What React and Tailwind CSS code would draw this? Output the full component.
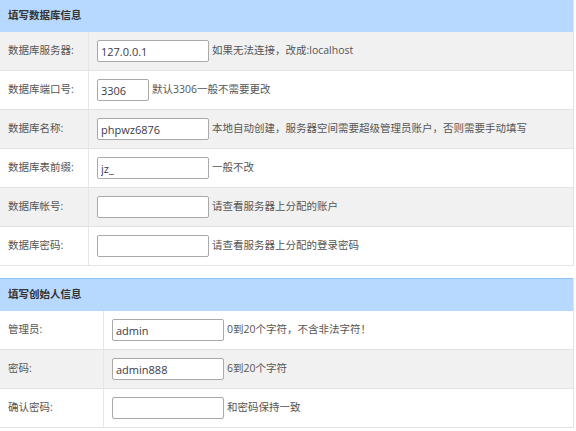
import React from "react";

const font = { fontFamily: '"Open Sans", "Noto Sans CJK SC", "Noto Sans", sans-serif' };

function Row({ label, value, hint, inputW, labelW, gray }) {
  return (
    <div className={`flex h-[39px] border-b border-[#e3e3e3] ${gray ? "bg-[#f1f1f1]" : "bg-white"}`}>
      <div
        className="flex items-center border-r border-[#e6e6e6] pl-[8px] text-[10.5px] text-[#555] shrink-0"
        style={{ width: labelW }}
      >
        {label}
      </div>
      <div className="flex items-center pl-[8px] text-[10.5px] text-[#555]">
        <input
          defaultValue={value}
          className="h-[22px] rounded-[2px] border border-[#a9a9a9] bg-white px-[3px] text-[11px] text-[#3a3a4a] outline-none"
          style={{ width: inputW, ...font }}
        />
        <span className="ml-[3px] whitespace-nowrap">{hint}</span>
      </div>
    </div>
  );
}

function Header({ title, top }) {
  return (
    <div
      className={`flex items-center bg-[#b8d9ff] pl-[8px] text-[10.5px] font-bold text-[#333] ${
        top ? "border-t border-[#8fc3f5] h-[33px]" : "h-[32px]"
      }`}
    >
      {title}
    </div>
  );
}

export default function App() {
  const db = [
    ["数据库服务器:", "127.0.0.1", "如果无法连接，改成:localhost", 112],
    ["数据库端口号:", "3306", "默认3306一般不需要更改", 52],
    ["数据库名称:", "phpwz6876", "本地自动创建，服务器空间需要超级管理员账户，否则需要手动填写", 112],
    ["数据库表前缀:", "jz_", "一般不改", 112],
    ["数据库帐号:", "", "请查看服务器上分配的账户", 112],
    ["数据库密码:", "", "请查看服务器上分配的登录密码", 112],
  ];
  const admin = [
    ["管理员:", "admin", "0到20个字符，不含非法字符！"],
    ["密码:", "admin888", "6到20个字符"],
    ["确认密码:", "", "和密码保持一致"],
  ];
  return (
    <div className="w-[576px] h-[431px] overflow-hidden bg-white" style={font}>
      <div className="w-[574px] border-r border-[#e3e3e3]">
        <Header title="填写数据库信息" />
        {db.map((r, i) => (
          <Row key={i} label={r[0]} value={r[1]} hint={r[2]} inputW={r[3]} labelW={89} gray={i % 2 === 0} />
        ))}
      </div>
      <div className="mt-[12px] w-[574px] border-r border-[#e3e3e3]">
        <Header title="填写创始人信息" top />
        {admin.map((r, i) => (
          <Row key={i} label={r[0]} value={r[1]} hint={r[2]} inputW={112} labelW={104} gray={i % 2 === 1} />
        ))}
      </div>
    </div>
  );
}
